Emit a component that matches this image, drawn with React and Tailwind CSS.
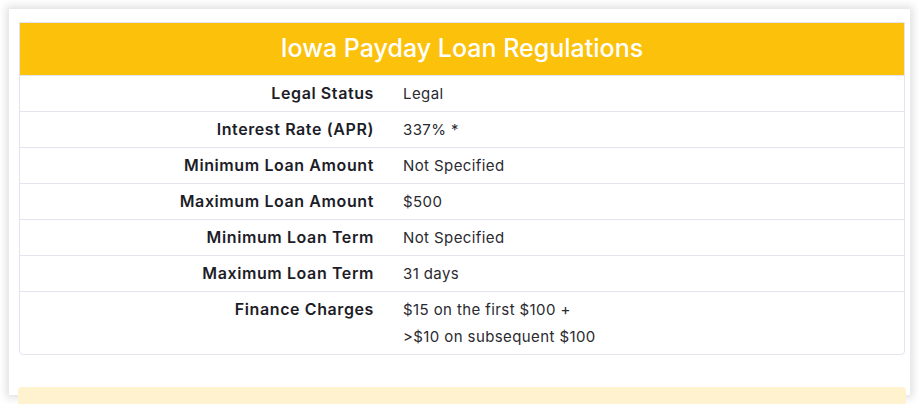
export default function App() {
  const rows = [
    ["Legal Status", ["Legal"]],
    ["Interest Rate (APR)", ["337% *"]],
    ["Minimum Loan Amount", ["Not Specified"]],
    ["Maximum Loan Amount", ["$500"]],
    ["Minimum Loan Term", ["Not Specified"]],
    ["Maximum Loan Term", ["31 days"]],
    ["Finance Charges", ["$15 on the first $100 +", ">$10 on subsequent $100"]],
  ];
  return (
    <div className="w-[919px] h-[404px] bg-white pt-[9px] pl-[9px] overflow-hidden" style={{ fontFamily: "Inter, 'Open Sans', sans-serif" }}>
      <div className="w-[901px] h-[386px] bg-white shadow-[0_0_8px_3px_rgba(0,0,0,0.12)] pt-[13px] pl-[10px] pr-[5px]">
        <div className="border border-[#e4e3f0] rounded-b-[4px] overflow-hidden">
          <div className="h-[52px] bg-[#fcc10b] flex items-center justify-center text-white text-[25px] font-medium">
            Iowa Payday Loan Regulations
          </div>
          {rows.map(([label, vals]) => (
            <div key={label} className="flex border-t border-[#e4e3f0] py-[4px] leading-[27px]">
              <div className="w-[369px] shrink-0 text-right pr-[15px] text-[16px] tracking-[0.6px] font-semibold text-[#1d1d28]">{label}</div>
              <div className="pl-[14px] text-[15px] tracking-[0.4px] text-[#2a2a30]">
                {vals.map((v) => (
                  <div key={v}>{v}</div>
                ))}
              </div>
            </div>
          ))}
        </div>
        <div className="mt-[32px] h-[20px] bg-[#fff3cf] rounded-t-[4px] -ml-px mr-[-1px]"></div>
      </div>
    </div>
  );
}
